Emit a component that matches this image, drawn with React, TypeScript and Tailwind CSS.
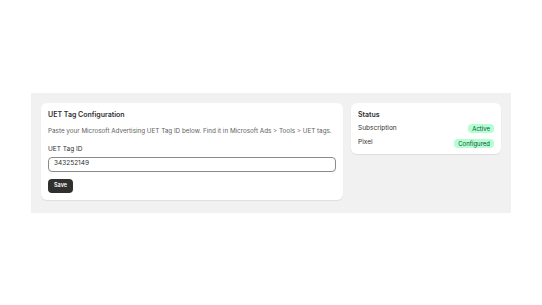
import React from "react";

export default function App() {
  return (
    <div
      className="flex h-[305px] w-full items-center justify-center bg-white"
      style={{ fontFamily: "Inter, 'Noto Sans', sans-serif" }}
    >
      <div className="flex w-[480px] items-start gap-[8px] bg-[#f1f1f1] px-[10px] pt-[10px] pb-[13px]">
        <div className="flex w-[302px] flex-col rounded-[6px] bg-white px-[7px] pt-[7px] pb-[7px] shadow-[0_1px_1px_rgba(0,0,0,0.08)]">
          <div className="text-[7px] font-semibold leading-[10px] text-[#303030]">UET Tag Configuration</div>
          <div className="mt-[7px] text-[6.3px] leading-[9px] text-[#616161]">
            Paste your Microsoft Advertising UET Tag ID below. Find it in Microsoft Ads &gt; Tools &gt; UET tags.
          </div>
          <div className="mt-[9px] text-[6.5px] leading-[9px] text-[#303030]">UET Tag ID</div>
          <div className="mt-[3px] flex h-[15px] items-center rounded-[4px] border border-[#8a8a8a] px-[5px] text-[6.5px] text-[#303030]">
            343252149
          </div>
          <div className="mt-[7px] flex">
            <button className="flex h-[14px] w-[25px] items-center justify-center rounded-[4px] bg-[#303030] text-[5.5px] font-semibold text-white">
              Save
            </button>
          </div>
        </div>
        <div className="flex w-[150px] flex-col rounded-[6px] bg-white px-[7px] pt-[7px] pb-[6px] shadow-[0_1px_1px_rgba(0,0,0,0.08)]">
          <div className="text-[7px] font-semibold leading-[10px] text-[#303030]">Status</div>
          <div className="mt-[4px] flex items-center justify-between">
            <span className="text-[6.5px] text-[#303030]">Subscription</span>
            <span className="rounded-[4px] bg-[#b4fed2] px-[4px] text-[6px] leading-[9px] text-[#0c5132]">Active</span>
          </div>
          <div className="mt-[5px] flex items-center justify-between">
            <span className="text-[6.5px] text-[#303030]">Pixel</span>
            <span className="rounded-[4px] bg-[#b4fed2] px-[4px] text-[6px] leading-[9px] text-[#0c5132]">Configured</span>
          </div>
        </div>
      </div>
    </div>
  );
}
